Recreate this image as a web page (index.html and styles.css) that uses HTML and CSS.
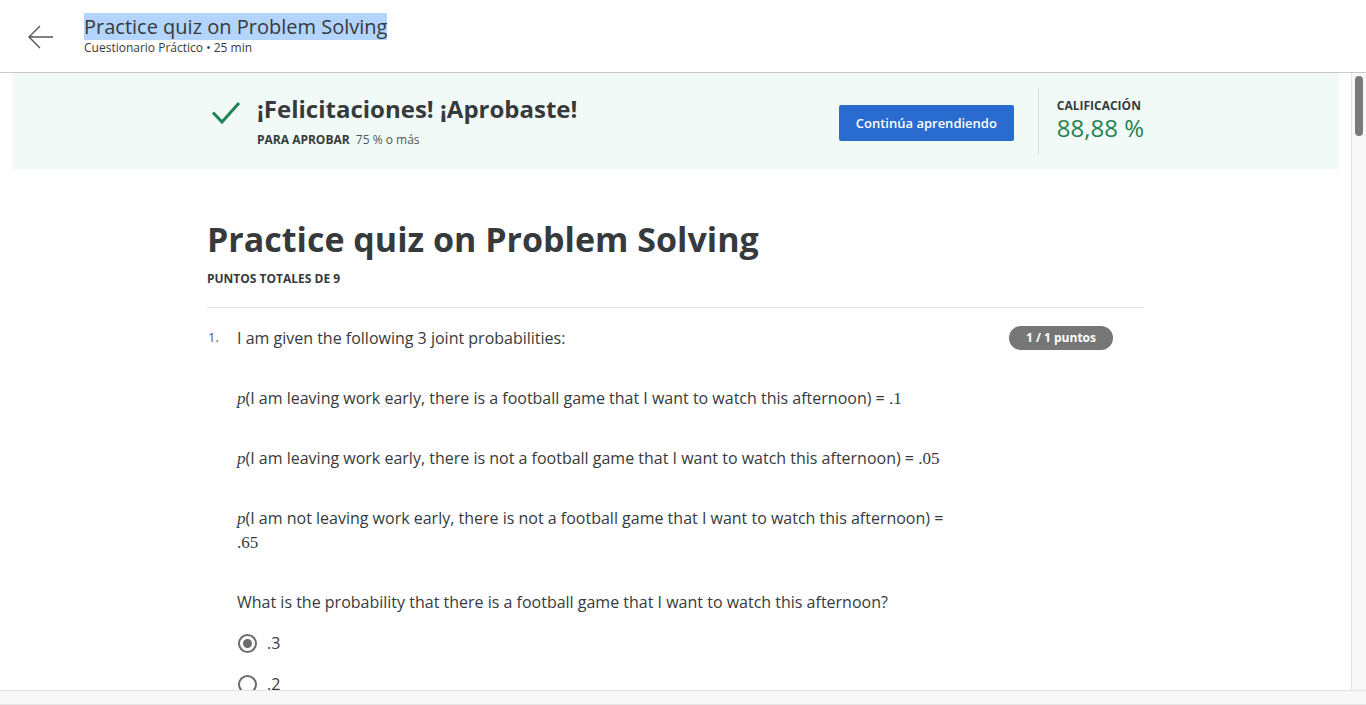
FILE: index.html
```html
<!DOCTYPE html>
<html lang="es">
<head>
<meta charset="utf-8">
<title>Practice quiz on Problem Solving</title>
<link rel="stylesheet" href="styles.css">
</head>
<body>
<header class="header">
  <button class="back" aria-label="Volver">
    <svg width="28" height="28" viewBox="0 0 28 28"><path d="M26 14H3M13 3L2 14l11 11" fill="none" stroke="#555" stroke-width="1.4"/></svg>
  </button>
  <div class="head-text">
    <div class="head-title"><span class="sel">Practice quiz on Problem Solving</span></div>
    <div class="head-sub">Cuestionario Práctico • 25 min</div>
  </div>
</header>
<div class="frame">
  <div class="viewport">
    <section class="banner">
      <div class="banner-inner">
        <div class="result">
          <svg class="check" width="40" height="40" viewBox="0 0 40 40"><path d="M6 19.5L15 29L32 10" fill="none" stroke="#1f8354" stroke-width="3"/></svg>
          <div>
            <div class="result-title">¡Felicitaciones! ¡Aprobaste!</div>
            <div class="result-sub"><b>PARA APROBAR</b> 75 % o más</div>
          </div>
        </div>
        <div class="actions">
          <button class="btn">Continúa aprendiendo</button>
          <div class="vdiv"></div>
          <div class="grade">
            <div class="grade-label">CALIFICACIÓN</div>
            <div class="grade-value">88,88 %</div>
          </div>
        </div>
      </div>
    </section>
    <main class="content">
      <h1 class="quiz-title">Practice quiz on Problem Solving</h1>
      <div class="total">PUNTOS TOTALES DE 9</div>
      <div class="question">
        <div class="qnum">1.</div>
        <div class="qbody">
          <p>I am given the following 3 joint probabilities:</p>
          <p><i class="m">p</i>(I am leaving work early, there is a football game that I want to watch this afternoon) = <span class="m">.1</span></p>
          <p><i class="m">p</i>(I am leaving work early, there is not a football game that I want to watch this afternoon) = <span class="m">.05</span></p>
          <p><i class="m">p</i>(I am not leaving work early, there is not a football game that I want to watch this afternoon) = <span class="m">.65</span></p>
          <p>What is the probability that there is a football game that I want to watch this afternoon?</p>
          <div class="option"><span class="radio on"></span><span class="opt-label">.3</span></div>
          <div class="option"><span class="radio"></span><span class="opt-label">.2</span></div>
        </div>
        <div class="badge">1 / 1 puntos</div>
      </div>
    </main>
  </div>
  <div class="vscroll"><div class="thumb"></div></div>
</div>
<div class="hscroll"></div>
</body>
</html>
```

FILE: styles.css
```css
* { box-sizing: border-box; }
html, body { margin: 0; height: 705px; overflow: hidden; }
body {
  font-family: "Open Sans", "Noto Sans", sans-serif;
  color: #373a3c;
  background: #fff;
}
.header {
  height: 73px;
  border-bottom: 1px solid #c9c9c9;
  display: flex;
  align-items: center;
  padding-left: 27px;
}
.back {
  border: 0;
  background: none;
  padding: 0;
  width: 28px;
  height: 28px;
  margin-top: 2px;
  display: flex;
}
.head-text { margin-left: 29px; margin-top: -3px; }
.head-title { font-size: 20px; line-height: 25px; color: #373a3c; }
.sel { background: #b3d4fc; }
.head-sub { font-size: 12px; line-height: 16px; color: #373a3c; margin-top: 1px; }

.frame { display: flex; height: 617px; }
.viewport {
  flex: 1;
  overflow: hidden;
  border-right: 1px solid #e4e4e4;
}
.vscroll {
  width: 14px;
  background: #f8f8f8;
  padding: 3px 0 0 3px;
}
.thumb {
  width: 8px;
  height: 60px;
  border-radius: 4px;
  background: #7a7a7a;
}
.hscroll {
  height: 15px;
  border-top: 1px solid #e2e2e2;
  border-bottom: 1px solid #e6e6e6;
  background: #f8f8f8;
}

.banner {
  margin: 0 12px;
  height: 96px;
  background: #f1faf6;
}
.banner-inner {
  width: 937px;
  margin: 0 auto;
  height: 100%;
  display: flex;
  align-items: center;
  justify-content: space-between;
}
.result { display: flex; align-items: flex-start; margin-top: -1px; }
.check { margin-right: 10px; margin-top: 0; }
.result-title { font-size: 24px; font-weight: 700; line-height: 32px; color: #373a3c; }
.result-sub { font-size: 12px; line-height: 16px; margin-top: 7px; color: #555; }
.result-sub b { color: #373a3c; margin-right: 3px; }
.actions { display: flex; align-items: center; }
.btn {
  width: 175px;
  height: 36px;
  border: 0;
  border-radius: 2px;
  background: #2a6bcf;
  color: #fff;
  font-family: "Open Sans", sans-serif;
  font-size: 13px;
  font-weight: 600;
  margin-top: 4px;
}
.vdiv { width: 1px; height: 67px; background: #dcdcdc; margin: 0 18px 0 24px; }
.grade { white-space: nowrap; margin-top: -3px; }
.grade-label { font-size: 12px; font-weight: 700; line-height: 16px; color: #373a3c; }
.grade-value { font-size: 24px; line-height: 28px; color: #1f8354; }

.content { width: 937px; margin: 0 auto; }
.quiz-title {
  margin: 48px 0 0;
  font-size: 34px;
  line-height: 44px;
  font-weight: 700;
  color: #373a3c;
}
.total {
  font-size: 12px;
  font-weight: 700;
  line-height: 16px;
  margin-top: 10px;
  padding-bottom: 20px;
  border-bottom: 1px solid #e1e1e1;
}
.question { display: flex; align-items: flex-start; padding-top: 18px; }
.qnum { width: 30px; font-size: 13px; line-height: 24px; color: #555; padding-left: 1px; margin-top: -1px; }
.qbody { width: 720px; font-size: 16px; line-height: 24px; }
.qbody p { margin: 0 0 36px; }
.qbody p:nth-of-type(5) { margin-bottom: 17px; }
.m { font-family: "Liberation Serif", "DejaVu Serif", serif; font-size: 17px; line-height: 1; }
i.m { font-style: italic; }
.option { display: flex; align-items: center; height: 24px; margin-bottom: 17px; }
.radio {
  width: 19px;
  height: 19px;
  border: 2px solid #6b6b6b;
  border-radius: 50%;
  display: flex;
  align-items: center;
  justify-content: center;
  margin-left: 1px;
}
.radio.on::after {
  content: "";
  width: 9px;
  height: 9px;
  border-radius: 50%;
  background: #6b6b6b;
}
.opt-label { margin-left: 10px; }
.badge {
  margin-left: auto;
  margin-right: 31px;
  height: 24px;
  padding: 0 17px;
  border-radius: 12px;
  background: #767676;
  color: #fff;
  font-size: 12px;
  font-weight: 700;
  line-height: 24px;
  white-space: nowrap;
}
```
